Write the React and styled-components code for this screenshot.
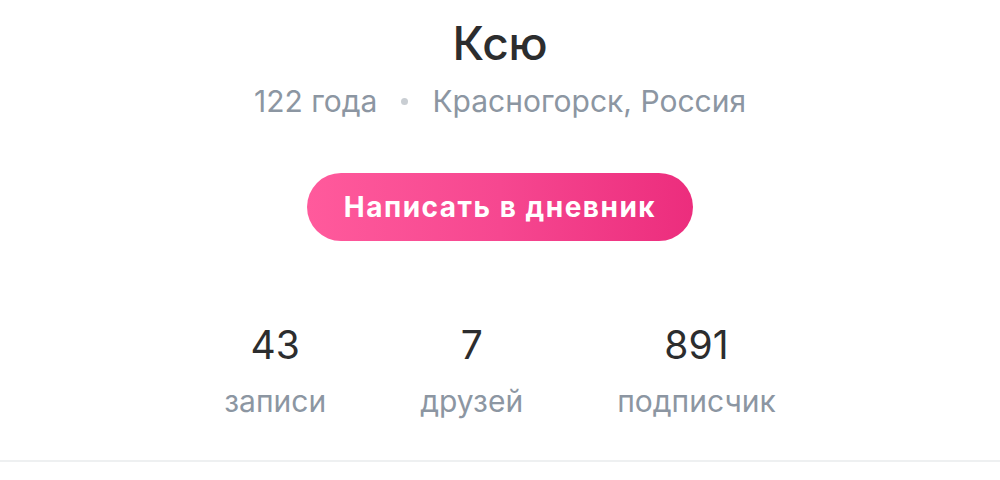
import React from "react";
import styled, { createGlobalStyle } from "styled-components";

const Global = createGlobalStyle`
  html, body { margin: 0; padding: 0; background: #fff; }
  body { font-family: Inter, "Noto Sans", sans-serif; -webkit-font-smoothing: antialiased; }
`;

const Page = styled.div`
  width: 1000px;
  height: 480px;
  display: flex;
  flex-direction: column;
  align-items: center;
  overflow: hidden;
`;

const Name = styled.h1`
  margin: 15px 0 0;
  font-size: 46px;
  line-height: 56px;
  font-weight: 500;
  color: #2c2d2e;
  letter-spacing: -0.2px;
`;

const Meta = styled.div`
  margin-top: 12px;
  display: flex;
  align-items: center;
  gap: 24px;
  font-size: 30px;
  line-height: 36px;
  color: #8c96a2;
`;

const Dot = styled.span`
  width: 7px;
  height: 7px;
  border-radius: 50%;
  background: #c9ced3;
`;

const WriteButton = styled.button`
  margin-top: 54px;
  width: 386px;
  height: 68px;
  padding: 0;
  border: 0;
  border-radius: 34px;
  background: linear-gradient(90deg, #ff5a9c 0%, #f64790 50%, #ec2d7d 100%);
  color: #fff;
  font-family: inherit;
  font-size: 28px;
  font-weight: 700;
  letter-spacing: 1.5px;
  cursor: pointer;
`;

const Stats = styled.div`
  margin-top: 80px;
  display: flex;
  gap: 94px;
`;

const Stat = styled.div`
  display: flex;
  flex-direction: column;
  align-items: center;
`;

const Value = styled.div`
  font-size: 39px;
  line-height: 48px;
  color: #2c2d2e;
`;

const Label = styled.div`
  margin-top: 14px;
  font-size: 30px;
  line-height: 36px;
  color: #8c96a2;
`;

const Divider = styled.div`
  margin-top: auto;
  margin-bottom: 18px;
  width: 100%;
  height: 2px;
  background: #eef0f1;
`;

export default function App() {
  const stats = [
    ["43", "записи"],
    ["7", "друзей"],
    ["891", "подписчик"],
  ];
  return (
    <>
      <Global />
      <Page>
        <Name>Ксю</Name>
        <Meta>
          <span>122 года</span>
          <Dot />
          <span>Красногорск, Россия</span>
        </Meta>
        <WriteButton>Написать в дневник</WriteButton>
        <Stats>
          {stats.map(([v, l]) => (
            <Stat key={l}>
              <Value>{v}</Value>
              <Label>{l}</Label>
            </Stat>
          ))}
        </Stats>
        <Divider />
      </Page>
    </>
  );
}
